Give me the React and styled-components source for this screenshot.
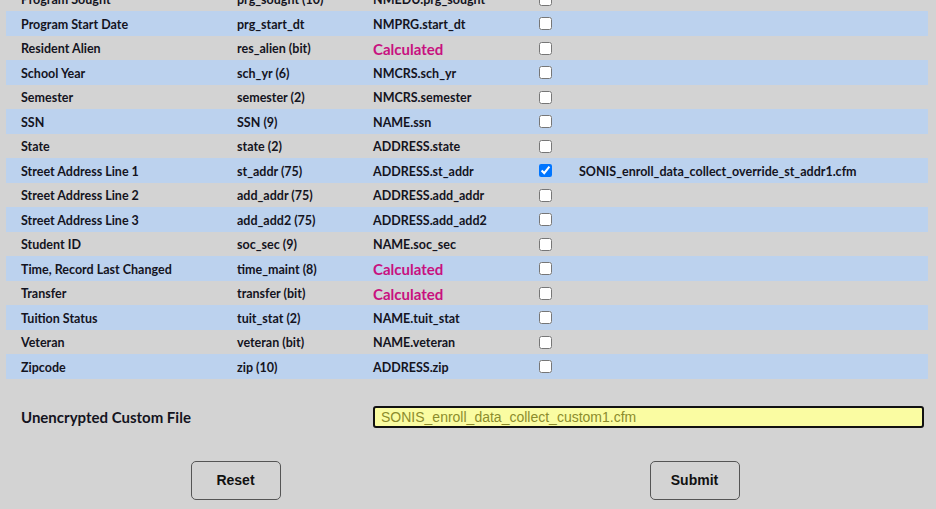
import React from "react";
import styled, { createGlobalStyle } from "styled-components";

const GlobalStyle = createGlobalStyle`
  html, body {
    margin: 0;
    padding: 0;
    background: #d3d3d3;
    overflow: hidden;
  }
  body {
    font-family: "Lato", "Noto Sans", sans-serif;
    color: #14141e;
  }
`;

const Page = styled.div`
  width: 936px;
  height: 509px;
  overflow: hidden;
  background: #d3d3d3;
`;

const FieldTable = styled.div`
  margin: -13.5px 8px 0 6px;
`;

const Row = styled.div`
  display: grid;
  grid-template-columns: 216px 136px 166px 40px 1fr;
  align-items: center;
  height: 24.5px;
  padding-left: 15px;
  background: ${p => (p.$shaded ? "#bcd2ee" : "transparent")};
  font-size: 12.5px;
  font-weight: 700;
`;

const Cell = styled.div`
  white-space: nowrap;
  display: flex;
  align-items: center;
  padding-top: ${p => (p.$box ? "1px" : "2px")};
`;

const Calc = styled.span`
  color: #c8117f;
  font-size: 15px;
  font-weight: 700;
`;

const Check = styled.input`
  margin: 0;
  width: 13px;
  height: 13px;
`;

const CustomRow = styled.div`
  display: flex;
  align-items: center;
  margin: 26px 12px 0 21px;
  height: 24px;
`;

const CustomLabel = styled.div`
  width: 352px;
  font-size: 15px;
  font-weight: 700;
`;

const CustomInput = styled.input`
  flex: 1;
  height: 22px;
  box-sizing: border-box;
  border: 2px solid #111;
  border-radius: 3px;
  background: #fafca2;
  color: #8c8c2c;
  font-family: "Liberation Sans", Arial, sans-serif;
  font-size: 14px;
  padding: 0 6px;
  outline: none;
`;

const ButtonBar = styled.div`
  display: grid;
  grid-template-columns: 1fr 1fr;
  justify-items: center;
  margin: 32px 12px 0 6px;
`;

const FormButton = styled.button`
  width: 90px;
  height: 39px;
  background: transparent;
  border: 1px solid #555;
  border-radius: 5px;
  font-family: "Liberation Sans", Arial, sans-serif;
  font-size: 14px;
  font-weight: 700;
  color: #111;
`;

const fields = [
  ["Program Sought", "prg_sought (10)", "NMEDU.prg_sought"],
  ["Program Start Date", "prg_start_dt", "NMPRG.start_dt"],
  ["Resident Alien", "res_alien (bit)", null],
  ["School Year", "sch_yr (6)", "NMCRS.sch_yr"],
  ["Semester", "semester (2)", "NMCRS.semester"],
  ["SSN", "SSN (9)", "NAME.ssn"],
  ["State", "state (2)", "ADDRESS.state"],
  ["Street Address Line 1", "st_addr (75)", "ADDRESS.st_addr", "SONIS_enroll_data_collect_override_st_addr1.cfm"],
  ["Street Address Line 2", "add_addr (75)", "ADDRESS.add_addr"],
  ["Street Address Line 3", "add_add2 (75)", "ADDRESS.add_add2"],
  ["Student ID", "soc_sec (9)", "NAME.soc_sec"],
  ["Time, Record Last Changed", "time_maint (8)", null],
  ["Transfer", "transfer (bit)", null],
  ["Tuition Status", "tuit_stat (2)", "NAME.tuit_stat"],
  ["Veteran", "veteran (bit)", "NAME.veteran"],
  ["Zipcode", "zip (10)", "ADDRESS.zip"],
];

const App = () => {
  return (
    <>
      <GlobalStyle />
      <Page>
        <FieldTable>
          {fields.map(([label, col, source, override], i) => (
            <Row key={label} $shaded={i % 2 === 1}>
              <Cell>{label}</Cell>
              <Cell>{col}</Cell>
              <Cell>{source ? source : <Calc>Calculated</Calc>}</Cell>
              <Cell $box>
                <Check type="checkbox" defaultChecked={!!override} />
              </Cell>
              <Cell>{override}</Cell>
            </Row>
          ))}
        </FieldTable>
        <CustomRow>
          <CustomLabel>Unencrypted Custom File</CustomLabel>
          <CustomInput defaultValue="SONIS_enroll_data_collect_custom1.cfm" />
        </CustomRow>
        <ButtonBar>
          <FormButton type="reset">Reset</FormButton>
          <FormButton type="submit">Submit</FormButton>
        </ButtonBar>
      </Page>
    </>
  );
};

export default App;
